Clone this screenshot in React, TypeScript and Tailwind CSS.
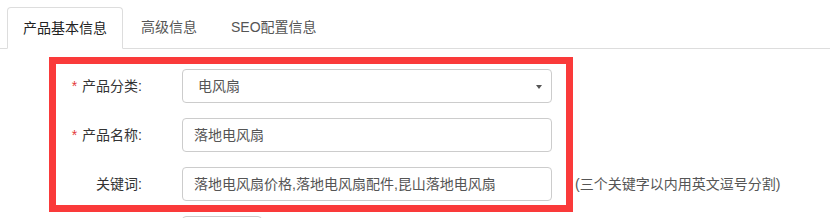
import React from "react";

const font = { fontFamily: '"Liberation Sans", "Noto Sans CJK SC", sans-serif' };

function Label({ text, required }: { text: string; required?: boolean }) {
  return (
    <div className="flex w-[142px] shrink-0 items-center justify-end text-sm leading-5 text-[#333]">
      {required ? <span className="mr-[5px] text-[#e4393c]">*</span> : null}
      <span>{text}:</span>
    </div>
  );
}

function Field({ children }: { children: React.ReactNode }) {
  return (
    <div className="flex h-[34px] w-[370px] items-center rounded border border-[#ccc] bg-white pl-[11px] pr-2 text-sm text-[#555]">
      {children}
    </div>
  );
}

export default function App() {
  return (
    <div className="relative h-[218px] w-[830px] overflow-hidden bg-white" style={font}>
      {/* tabs */}
      <div className="flex border-b border-[#ddd] pl-[7px] pt-[7px]">
        <div className="-mb-px rounded-t border border-b-white border-[#ddd] bg-white px-[15px] py-[10px] text-sm leading-5 text-[#222]">
          产品基本信息
        </div>
        <div className="ml-[2px] px-[16px] py-[10px] text-sm leading-5 text-[#555]">高级信息</div>
        <div className="ml-[2px] px-[16px] py-[10px] text-sm leading-5 text-[#555]">SEO配置信息</div>
      </div>

      {/* form */}
      <div className="flex flex-col gap-[15px] pt-[20px]">
        <div className="flex items-center">
          <Label text="产品分类" required />
          <div className="ml-[40px]">
            <div className="flex h-[34px] w-[370px] items-center justify-between rounded border border-[#ccc] bg-white pl-[15px] pr-[8px] text-sm text-[#555]">
              <span>电风扇</span>
              <svg width="8" height="6" viewBox="0 0 8 6" className="mt-px">
                <path d="M1 1h6L4 5z" fill="#555" />
              </svg>
            </div>
          </div>
        </div>
        <div className="flex items-center">
          <Label text="产品名称" required />
          <div className="ml-[40px]">
            <Field>落地电风扇</Field>
          </div>
        </div>
        <div className="flex items-center">
          <Label text="关键词" />
          <div className="ml-[40px]">
            <Field>落地电风扇价格,落地电风扇配件,昆山落地电风扇</Field>
          </div>
          <span className="ml-[23px] text-sm leading-5 text-[#555]">(三个关键字以内用英文逗号分割)</span>
        </div>
        <div className="flex items-center">
          <div className="w-[142px] shrink-0" />
          <div className="ml-[40px] h-[34px] w-[80px] rounded border border-[#ccc] bg-white" />
        </div>
      </div>

      {/* annotation overlay */}
      <div className="pointer-events-none absolute left-[49px] top-[57px] h-[155px] w-[524px] border-[7px] border-[#fa3a3a]" />
    </div>
  );
}
